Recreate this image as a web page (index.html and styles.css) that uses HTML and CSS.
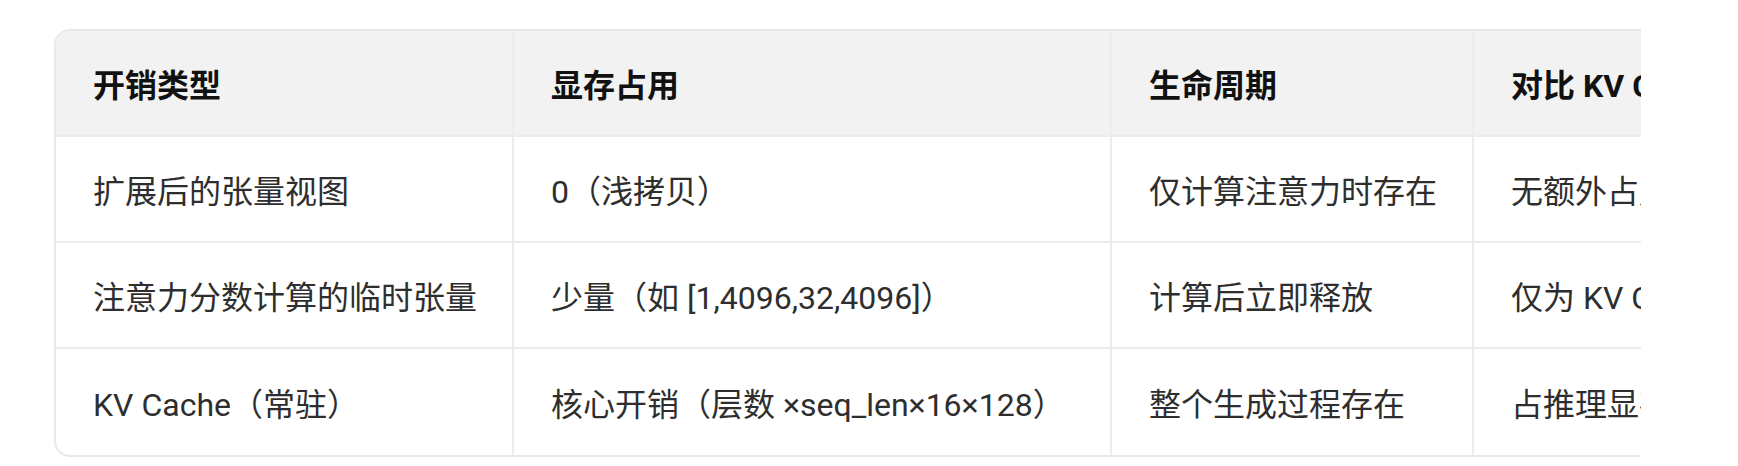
FILE: index.html
```html
<!DOCTYPE html>
<html lang="zh-CN">
<head>
<meta charset="utf-8">
<title>显存开销对比</title>
<link rel="stylesheet" href="styles.css">
</head>
<body>
<div class="scroller">
  <div class="card">
    <table class="grid">
      <colgroup>
        <col class="c1"><col class="c2"><col class="c3"><col class="c4">
      </colgroup>
      <thead>
        <tr><th>开销类型</th><th>显存占用</th><th>生命周期</th><th>对比 KV Cache</th></tr>
      </thead>
      <tbody>
        <tr><td>扩展后的张量视图</td><td>0（浅拷贝）</td><td>仅计算注意力时存在</td><td>无额外占用</td></tr>
        <tr><td>注意力分数计算的临时张量</td><td>少量（如 [1,4096,32,4096]）</td><td>计算后立即释放</td><td>仅为 KV Cache 的一小部分</td></tr>
        <tr><td>KV Cache（常驻）</td><td>核心开销（层数 ×seq_len×16×128）</td><td>整个生成过程存在</td><td>占推理显存的大头</td></tr>
      </tbody>
    </table>
  </div>
</div>
</body>
</html>
```
FILE: styles.css
```css
html, body {
  margin: 0;
  padding: 0;
  background: #ffffff;
}

body {
  font-family: Roboto, "Noto Sans CJK SC", sans-serif;
  color: #2b2b2b;
}

.scroller {
  margin: 29px 0 0 54px;
  width: 1587px;
  overflow: hidden;
}

.card {
  width: 1900px;
  border: 2px solid #e9e9e9;
  border-radius: 16px;
  overflow: hidden;
}

.grid {
  width: 100%;
  table-layout: fixed;
  border-collapse: separate;
  border-spacing: 0;
  font-size: 32px;
}

.c1 { width: 458px; }
.c2 { width: 598px; }
.c3 { width: 362px; }
.c4 { width: auto; }

.grid th,
.grid td {
  height: 106px;
  padding: 0 0 0 37px;
  text-align: left;
  vertical-align: middle;
  white-space: nowrap;
  border-right: 2px solid #ececec;
  border-bottom: 2px solid #ececec;
  box-sizing: border-box;
}

.grid th:last-child,
.grid td:last-child {
  border-right: none;
}

.grid tbody tr:last-child td {
  border-bottom: none;
}

.grid th {
  background: #f2f2f2;
  color: #111111;
  font-weight: 700;
}

.grid td {
  font-weight: 400;
  color: #2e2e2e;
}
```
